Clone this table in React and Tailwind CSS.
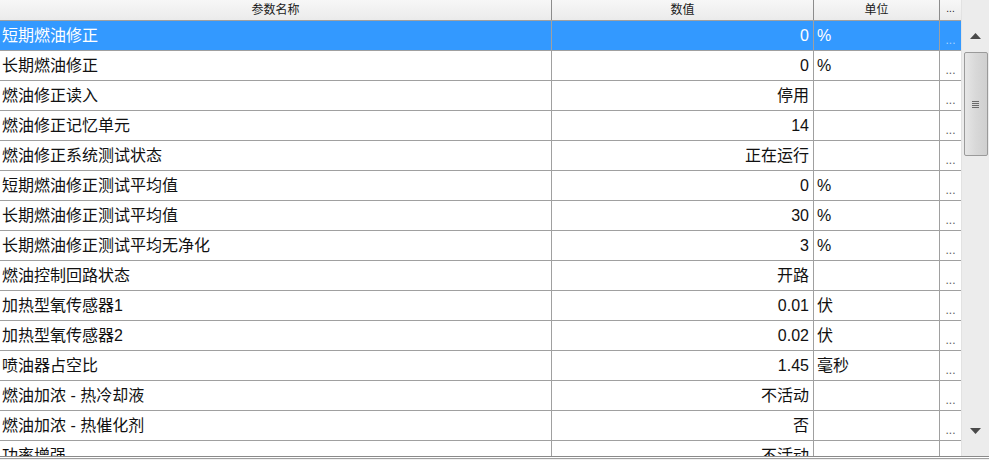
import React from "react";

const rows = [
    { name: "短期燃油修正", value: "0", unit: "%" },
    { name: "长期燃油修正", value: "0", unit: "%" },
    { name: "燃油修正读入", value: "停用", unit: "" },
    { name: "燃油修正记忆单元", value: "14", unit: "" },
    { name: "燃油修正系统测试状态", value: "正在运行", unit: "" },
    { name: "短期燃油修正测试平均值", value: "0", unit: "%" },
    { name: "长期燃油修正测试平均值", value: "30", unit: "%" },
    { name: "长期燃油修正测试平均无净化", value: "3", unit: "%" },
    { name: "燃油控制回路状态", value: "开路", unit: "" },
    { name: "加热型氧传感器1", value: "0.01", unit: "伏" },
    { name: "加热型氧传感器2", value: "0.02", unit: "伏" },
    { name: "喷油器占空比", value: "1.45", unit: "毫秒" },
    { name: "燃油加浓 - 热冷却液", value: "不活动", unit: "" },
    { name: "燃油加浓 - 热催化剂", value: "否", unit: "" },
    { name: "功率增强", value: "不活动", unit: "" },
];

const font = { fontFamily: '"Liberation Sans", "Noto Sans CJK SC", sans-serif' };

function Row({ row, selected }) {
    const text = selected ? "text-white" : "text-[#111111]";
    return (
        <div
            className={`flex h-[30px] shrink-0 border-b border-[#a0a0a0] text-[16px] leading-[30px] ${
                selected ? "bg-[#3399ff]" : "bg-white"
            } ${text}`}
        >
            <div className="w-[552px] shrink-0 border-r border-[#a0a0a0] pl-[2px] whitespace-nowrap overflow-hidden">
                {row.name}
            </div>
            <div className="w-[262px] shrink-0 border-r border-[#a0a0a0] pr-[4px] text-right whitespace-nowrap overflow-hidden">
                {row.value}
            </div>
            <div className="w-[126px] shrink-0 border-r border-[#a0a0a0] pl-[3px] whitespace-nowrap overflow-hidden">
                {row.unit}
            </div>
            <div
                className={`w-[21px] shrink-0 flex items-end justify-center pb-[3px] text-[12px] leading-[14px] ${
                    selected ? "text-[#a8d4ff]" : "text-[#606060]"
                }`}
            >
                ...
            </div>
        </div>
    );
}

function Scrollbar() {
    return (
        <div className="w-[28px] shrink-0 bg-[#ececec] flex flex-col items-center border-l border-[#e2e2e2]">
            <div className="h-[50px] w-full flex items-center justify-center pt-[22px]">
                <svg width="11" height="6" viewBox="0 0 11 6">
                    <path d="M5.5 0 L11 6 L0 6 Z" fill="#4a4a4a" />
                </svg>
            </div>
            <div className="mt-[2px] h-[104px] w-[24px] rounded-[2px] border border-[#9a9a9a] bg-gradient-to-r from-[#e6e6e6] via-[#d8d8d8] to-[#cfcfcf] flex items-center justify-center">
                <div className="flex flex-col gap-[1px]">
                    <div className="w-[7px] h-[1px] bg-[#6a6a6a]" />
                    <div className="w-[7px] h-[1px] bg-[#6a6a6a]" />
                    <div className="w-[7px] h-[1px] bg-[#6a6a6a]" />
                    <div className="w-[7px] h-[1px] bg-[#6a6a6a]" />
                </div>
            </div>
            <div className="flex-1" />
            <div className="h-[30px] w-full flex items-start justify-center pt-[2px]">
                <svg width="11" height="6" viewBox="0 0 11 6">
                    <path d="M0 0 L11 0 L5.5 6 Z" fill="#4a4a4a" />
                </svg>
            </div>
        </div>
    );
}

export default function App() {
    return (
        <div className="w-[989px] h-[460px] bg-[#f0f0f0] overflow-hidden" style={font}>
            <div className="flex h-[456px]">
                <div className="w-[961px] shrink-0 flex flex-col bg-white overflow-hidden">
                    {/* header */}
                    <div className="flex h-[21px] shrink-0 border-b border-[#a0a0a0] bg-gradient-to-b from-[#f7f7f7] to-[#ebebeb] text-[12px] leading-[20px] text-[#1a1a1a]">
                        <div className="w-[552px] shrink-0 border-r border-[#8c8c8c] text-center">参数名称</div>
                        <div className="w-[262px] shrink-0 border-r border-[#8c8c8c] text-center">数值</div>
                        <div className="w-[126px] shrink-0 border-r border-[#8c8c8c] text-center">单位</div>
                        <div className="w-[21px] shrink-0 text-center text-[10px] leading-[18px]">...</div>
                    </div>
                    <div className="flex flex-col flex-1 overflow-hidden">
                        {rows.map((r, i) => (
                            <Row key={i} row={r} selected={i === 0} />
                        ))}
                    </div>
                </div>
                <Scrollbar />
            </div>
            <div className="h-[1px] bg-[#8a8a8a]" />
            <div className="h-[1px] bg-white" />
            <div className="h-[1px] bg-[#a0a0a0]" />
        </div>
    );
}
